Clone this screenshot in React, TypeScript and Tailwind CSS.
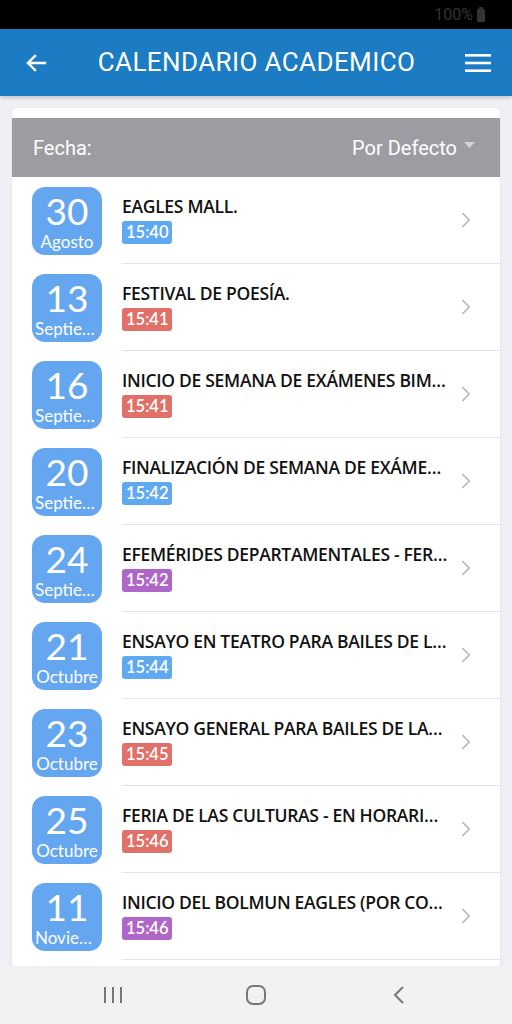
import { ChevronRight } from 'lucide-react';

type Item = {
  day: string;
  month: string;
  title: string;
  time: string;
  color: 'blue' | 'red' | 'purple';
};

const items: Item[] = [
  { day: '30', month: 'Agosto', title: 'EAGLES MALL.', time: '15:40', color: 'blue' },
  { day: '13', month: 'Septiembre', title: 'FESTIVAL DE POESÍA.', time: '15:41', color: 'red' },
  { day: '16', month: 'Septiembre', title: 'INICIO DE SEMANA DE EXÁMENES BIMESTRALES', time: '15:41', color: 'red' },
  { day: '20', month: 'Septiembre', title: 'FINALIZACIÓN DE SEMANA DE EXÁMENES BIMESTRALES', time: '15:42', color: 'blue' },
  { day: '24', month: 'Septiembre', title: 'EFEMÉRIDES DEPARTAMENTALES - FERIADO', time: '15:42', color: 'purple' },
  { day: '21', month: 'Octubre', title: 'ENSAYO EN TEATRO PARA BAILES DE LAS CULTURAS', time: '15:44', color: 'blue' },
  { day: '23', month: 'Octubre', title: 'ENSAYO GENERAL PARA BAILES DE LAS CULTURAS', time: '15:45', color: 'red' },
  { day: '25', month: 'Octubre', title: 'FERIA DE LAS CULTURAS - EN HORARIO ESCOLAR', time: '15:46', color: 'red' },
  { day: '11', month: 'Noviembre', title: 'INICIO DEL BOLMUN EAGLES (POR CONFIRMAR)', time: '15:46', color: 'purple' },
  { day: '15', month: 'Noviembre', title: 'CIERRE DEL BOLMUN EAGLES', time: '15:47', color: 'blue' },
];

const badge = {
  blue: 'bg-[#5ea9ef]',
  red: 'bg-[#e07068]',
  purple: 'bg-[#b065c8]',
};

function Row({ item }: { item: Item }) {
  return (
    <div className="flex h-[87px] shrink-0 items-center">
      <div className="flex w-[110px] shrink-0 justify-start pl-5">
        <div className="flex h-[68px] w-[70px] flex-col items-center overflow-hidden rounded-[13px] bg-[#65a6f0] text-white">
          <span className="mt-[4px] text-[37px] leading-[40px]">{item.day}</span>
          <span className="w-full truncate px-[3px] text-center text-[17px] leading-[22px]">{item.month}</span>
        </div>
      </div>
      <div className="flex h-full min-w-0 flex-1 items-center border-b border-[#e3e4e6]">
        <div className="min-w-0 flex-1 pb-[2px]">
          <div className="truncate font-['Open_Sans',sans-serif] text-[17.5px] font-semibold leading-[22px] tracking-[-0.3px] text-[#111]">
            {item.title}
          </div>
          <div className="mt-[4px] flex">
            <span className={`rounded-[3px] px-[4px] text-[16.5px] font-semibold leading-[23px] text-white ${badge[item.color]}`}>
              {item.time}
            </span>
          </div>
        </div>
        <ChevronRight size={26} strokeWidth={1.4} className="ml-[4px] mr-[21px] shrink-0 text-[#b3b3b3]" />
      </div>
    </div>
  );
}

export default function App() {
  return (
    <div className="flex h-[1024px] w-[512px] flex-col overflow-hidden bg-[#eef0f4] font-['Lato','Noto_Sans',sans-serif]">
      {/* Status bar */}
      <div className="flex h-[29px] shrink-0 items-center justify-end bg-black pr-[27px]">
        <span className="font-['Roboto',sans-serif] text-[16px] text-[#333]">100%</span>
        <div className="ml-[4px] flex flex-col items-center">
          <div className="h-[2px] w-[4px] bg-[#333]" />
          <div className="h-[13px] w-[8px] rounded-[1px] bg-[#333]" />
        </div>
      </div>

      {/* App bar */}
      <div className="relative z-10 flex h-[67px] shrink-0 items-center bg-[#1b7bc3] text-white shadow-[0_2px_4px_rgba(0,0,0,0.18)]">
        <svg className="ml-[24px] shrink-0" width="24" height="24" viewBox="0 0 24 24" fill="none" stroke="white" strokeWidth="2.4" strokeLinecap="square">
          <path d="M21 12H4M11 5l-7 7 7 7" />
        </svg>
        <div className="flex-1 text-center font-['Roboto',sans-serif] text-[26px] tracking-[0.4px]">CALENDARIO ACADEMICO</div>
        <svg className="mr-[21px] shrink-0" width="26" height="20" viewBox="0 0 26 20" fill="white">
          <rect x="0" y="1" width="26" height="2.6" />
          <rect x="0" y="8.7" width="26" height="2.6" />
          <rect x="0" y="16.4" width="26" height="2.6" />
        </svg>
      </div>

      {/* Card */}
      <div className="mx-[12px] mt-[12px] flex min-h-0 flex-1 flex-col overflow-hidden rounded-t-[4px] bg-white pt-[10px] shadow-[0_0_2px_rgba(0,0,0,0.1)]">
        <div className="flex h-[59px] shrink-0 items-center justify-between bg-[#9b9da2] pl-[21px] pr-[25px] text-white">
          <span className="font-['Roboto',sans-serif] text-[20px]">Fecha:</span>
          <div className="flex items-center">
            <span className="font-['Roboto',sans-serif] text-[20px]">Por Defecto</span>
            <svg className="ml-[7px] mb-[6px]" width="11" height="6" viewBox="0 0 11 6" fill="#d4d5d8">
              <path d="M0 0h11L5.5 6z" />
            </svg>
          </div>
        </div>
        <div className="flex min-h-0 flex-1 flex-col">
          {items.map((item, i) => (
            <Row key={i} item={item} />
          ))}
        </div>
      </div>

      {/* Navigation bar */}
      <div className="flex h-[58px] shrink-0 items-center justify-center bg-[#f2f2f2]">
        <div className="flex w-[143px] justify-center">
          <svg width="22" height="20" viewBox="0 0 22 20" fill="none" stroke="#777" strokeWidth="2">
            <path d="M3 2v16M11 2v16M19 2v16" />
          </svg>
        </div>
        <div className="flex w-[143px] justify-center">
          <svg width="22" height="22" viewBox="0 0 22 22" fill="none" stroke="#777" strokeWidth="2">
            <rect x="2" y="2" width="18" height="18" rx="6" />
          </svg>
        </div>
        <div className="flex w-[143px] justify-center">
          <svg width="14" height="22" viewBox="0 0 14 22" fill="none" stroke="#777" strokeWidth="2">
            <path d="M11 3l-8 8 8 8" />
          </svg>
        </div>
      </div>
    </div>
  );
}
